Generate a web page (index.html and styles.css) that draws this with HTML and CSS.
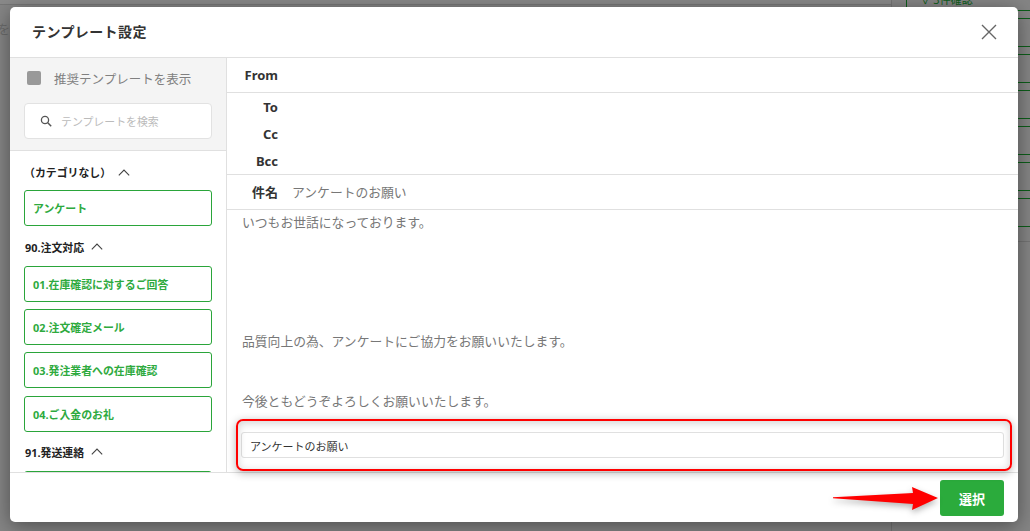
FILE: index.html
```html
<!DOCTYPE html>
<html lang="ja">
<head>
<meta charset="utf-8">
<title>テンプレート設定</title>
<link rel="stylesheet" href="styles.css">
</head>
<body>
<div class="backdrop">
  <div class="bg-topline"></div>
  <span class="bg-char">を</span>
  <div class="bg-divider"></div>
  <div class="bg-panel">
    <span class="bg-label">✓ 3件確認</span>
    <div class="bg-rows">
      <i></i><i></i><i></i><i></i><i></i><i></i><i class="bg-row-last"></i>
    </div>
  </div>
  <div class="bg-rule"></div>
</div>
<main class="modal">
  <header class="modal-head">
    <h1 class="modal-title">テンプレート設定</h1>
    <svg class="close-icon" width="16" height="16" viewBox="0 0 16 16"><path d="M1 1l14 14M15 1L1 15" fill="none" stroke="#666" stroke-width="1.4"/></svg>
  </header>
  <div class="modal-body">
    <aside class="side">
      <div class="side-top">
        <label class="recommend"><span class="check"></span><span>推奨テンプレートを表示</span></label>
        <div class="search">
          <svg class="search-icon" width="12" height="12" viewBox="0 0 12 12"><circle cx="5" cy="5" r="3.6" fill="none" stroke="#555" stroke-width="1.3"/><path d="M7.8 7.8l3.4 3.4" stroke="#555" stroke-width="1.5"/></svg>
          <span>テンプレートを検索</span>
        </div>
      </div>
      <div class="side-list">
        <div class="cat cat-first">（カテゴリなし）<svg class="chev chev-wide" width="12" height="7" viewBox="0 0 12 7"><path d="M.8 6.4L6 1l5.2 5.4" fill="none" stroke="#444" stroke-width="1.1"/></svg></div>
        <div class="item">アンケート</div>
        <div class="cat">90.注文対応<svg class="chev" width="12" height="7" viewBox="0 0 12 7"><path d="M.8 6.4L6 1l5.2 5.4" fill="none" stroke="#444" stroke-width="1.1"/></svg></div>
        <div class="item">01.在庫確認に対するご回答</div>
        <div class="item">02.注文確定メール</div>
        <div class="item">03.発注業者への在庫確認</div>
        <div class="item">04.ご入金のお礼</div>
        <div class="cat cat-last">91.発送連絡<svg class="chev" width="12" height="7" viewBox="0 0 12 7"><path d="M.8 6.4L6 1l5.2 5.4" fill="none" stroke="#444" stroke-width="1.1"/></svg></div>
        <div class="item"></div>
      </div>
    </aside>
    <section class="content">
      <div class="row row-from"><span class="lbl">From</span></div>
      <div class="row-group">
        <div class="row-tight"><span class="lbl">To</span></div>
        <div class="row-tight"><span class="lbl">Cc</span></div>
        <div class="row-tight"><span class="lbl">Bcc</span></div>
      </div>
      <div class="row row-subject"><span class="lbl">件名</span><span class="val">アンケートのお願い</span></div>
      <div class="mail">
        <p class="para">いつもお世話になっております。</p>
        <p class="para para-quality">品質向上の為、アンケートにご協力をお願いいたします。</p>
        <p class="para para-later">今後ともどうぞよろしくお願いいたします。</p>
        <div class="name-field">アンケートのお願い</div>
      </div>
    </section>
  </div>
  <footer class="modal-foot"><button class="select-btn">選択</button></footer>
  <div class="highlight"></div>
  <svg class="arrow" width="112" height="40" viewBox="0 0 112 40"><path d="M1 19.300L81 15 80 9 106 20 80 32 81 26 1 20.300z" fill="#f00"/></svg>
</main>
</body>
</html>
```
FILE: styles.css
```css
* { box-sizing: border-box; }
html, body { margin: 0; height: 100%; }
body {
  width: 1030px;
  height: 531px;
  overflow: hidden;
  background: #808080;
  font-family: "Noto Sans", "Noto Sans CJK JP", sans-serif;
  position: relative;
}
.backdrop { position: absolute; inset: 0; background: #858585; }
.bg-topline { height: 5px; width: 891px; border-bottom: 1px solid #777; background: #8a8a8a; }
.bg-char { position: absolute; left: -3px; top: 19px; font-size: 13px; color: #6c6c6c; }
.bg-divider { position: absolute; left: 891px; top: 0; bottom: 0; width: 1px; background: #747474; }
.bg-panel { position: absolute; left: 906px; top: 0; width: 124px; height: 227px; border-left: 1px solid #0c5e1a; }
.bg-label { position: absolute; left: 16px; top: -9px; font-size: 11px; color: #0c5e1a; white-space: nowrap; }
.bg-rows { position: absolute; top: 10px; left: 0; right: 0; display: flex; flex-direction: column; gap: 27px; }
.bg-rows i { display: block; height: 9px; border-top: 1px solid #0c5e1a; border-bottom: 1px solid #0c5e1a; }
.bg-rows .bg-row-last { border-bottom: 0; }
.bg-rule { position: absolute; left: 907px; right: 0; top: 241px; height: 1px; background: #747474; }
.modal {
  position: absolute;
  left: 10px; top: 7px;
  width: 1008px; height: 515px;
  background: #fff;
  border-radius: 5px;
  box-shadow: 0 4px 20px rgba(0,0,0,.42);
  display: flex;
  flex-direction: column;
  overflow: hidden;
  color: #222;
}
.modal-head {
  height: 51px;
  flex: none;
  padding: 0 21px 3px 22px;
  display: flex;
  align-items: center;
  justify-content: space-between;
  border-bottom: 1px solid #e0e0e0;
}
.modal-title { margin: 0; font-size: 14px; font-weight: 700; letter-spacing: .4px; color: #333; }
.close-icon { margin-top: 3px; }
.modal-body { flex: 1; min-height: 0; display: flex; }
.side { width: 217px; flex: none; border-right: 1px solid #e0e0e0; display: flex; flex-direction: column; min-height: 0; }
.side-top { height: 93px; flex: none; background: #f4f4f4; border-bottom: 1px solid #e0e0e0; padding: 13px 14px 0; }
.recommend { display: flex; align-items: center; gap: 13px; padding-left: 3px; font-size: 12.5px; color: #808080; height: 14px; }
.check { width: 14px; height: 14px; background: #999; border-radius: 2px; flex: none; }
.search { margin-top: 18px; height: 36px; background: #fff; border: 1px solid #e2e2e2; border-radius: 4px; display: flex; align-items: center; gap: 9px; padding-left: 15px; font-size: 10.9px; color: #bbb; }
.side-list { flex: 1; min-height: 0; overflow: hidden; padding: 0 14px; }
.cat { font-size: 10.9px; font-weight: 700; color: #222; height: 33px; padding: 0 0 6px 1px; display: flex; align-items: center; }
.cat-first { height: 39px; padding: 3px 0 0; }
.cat-last { height: 32.4px; }
.chev { margin-left: 7px; }
.chev-wide { margin-left: 7px; }
.item { height: 36px; margin-bottom: 7.15px; border: 1px solid #2aa53a; border-radius: 3px; padding: 0 8px; display: flex; align-items: center; font-size: 10.9px; font-weight: 700; color: #2eaa3e; background: #fff; flex: none; }
.content { flex: 1; min-width: 0; display: flex; flex-direction: column; min-height: 0; }
.row { display: flex; align-items: center; border-bottom: 1px solid #e0e0e0; flex: none; }
.row-from { height: 35px; }
.row-group { height: 82px; flex: none; border-bottom: 1px solid #e0e0e0; }
.row-tight { height: 27px; display: flex; align-items: center; }
.row-subject { height: 35px; padding-bottom: 2px; }
.lbl { width: 51px; text-align: right; font-size: 13px; font-weight: 700; color: #333; flex: none; }
.val { margin-left: 14px; font-size: 12.8px; color: #777; }
.mail { flex: 1; min-height: 0; position: relative; padding: 2px 15px 0; font-size: 12.8px; line-height: 20px; color: #777; overflow: hidden; }
.para { margin: 0; }
.para-quality { margin-top: 99px; }
.para-later { margin-top: 40px; }
.name-field { margin: 21px 0 0 -1px; height: 26px; width: 763px; border: 1px solid #e0e0e0; border-radius: 3px; padding-left: 8px; font-size: 11px; line-height: 27px; color: #333; }
.modal-foot { height: 50px; flex: none; border-top: 1px solid #e0e0e0; display: flex; align-items: center; justify-content: flex-end; padding: 0 14px 0 0; }
.select-btn { width: 64px; height: 36px; border: 0; background: #2bab3c; color: #fff; border-radius: 3px; font-family: inherit; font-size: 13px; font-weight: 700; padding: 2px 0 0; }
.highlight { position: absolute; left: 226px; top: 412px; width: 776px; height: 52px; border: 2px solid #f00; border-radius: 7px; box-shadow: 0 2px 8px rgba(0,0,0,.3), inset 0 2px 8px rgba(0,0,0,.18); pointer-events: none; }
.arrow { position: absolute; left: 822px; top: 471px; filter: drop-shadow(0 3px 3px rgba(0,0,0,.3)); }
```
